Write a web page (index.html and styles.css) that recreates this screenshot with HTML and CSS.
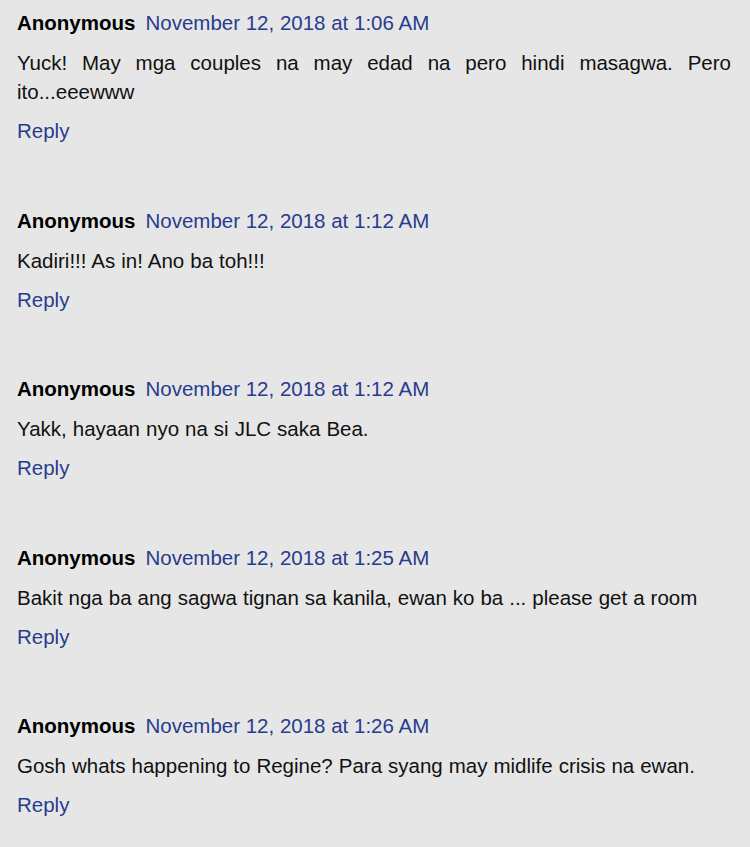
FILE: index.html
```html
<!DOCTYPE html>
<html lang="tl">
<head>
  <meta charset="UTF-8" />
  <meta name="viewport" content="width=device-width, initial-scale=1.0"/>
  <title>Comments</title>
  <link rel="stylesheet" href="styles.css">
</head>
<body>

  <div class="comments">
    <div class="comment">
      <div class="comment-header">
        <span class="user">Anonymous</span>
        <a class="date" href="#">November 12, 2018 at 1:06 AM</a>
      </div>
      <p class="comment-body">Yuck! May mga couples na may edad na pero hindi masagwa. Pero ito...eeewww</p>
      <a class="reply" href="#">Reply</a>
    </div>

    <div class="comment">
      <div class="comment-header">
        <span class="user">Anonymous</span>
        <a class="date" href="#">November 12, 2018 at 1:12 AM</a>
      </div>
      <p class="comment-body">Kadiri!!! As in! Ano ba toh!!!</p>
      <a class="reply" href="#">Reply</a>
    </div>

    <div class="comment">
      <div class="comment-header">
        <span class="user">Anonymous</span>
        <a class="date" href="#">November 12, 2018 at 1:12 AM</a>
      </div>
      <p class="comment-body">Yakk, hayaan nyo na si JLC saka Bea.</p>
      <a class="reply" href="#">Reply</a>
    </div>

    <div class="comment">
      <div class="comment-header">
        <span class="user">Anonymous</span>
        <a class="date" href="#">November 12, 2018 at 1:25 AM</a>
      </div>
      <p class="comment-body">Bakit nga ba ang sagwa tignan sa kanila, ewan ko ba ... please get a room</p>
      <a class="reply" href="#">Reply</a>
    </div>

    <div class="comment">
      <div class="comment-header">
        <span class="user">Anonymous</span>
        <a class="date" href="#">November 12, 2018 at 1:26 AM</a>
      </div>
      <p class="comment-body">Gosh whats happening to Regine? Para syang may midlife crisis na ewan.</p>
      <a class="reply" href="#">Reply</a>
    </div>
  </div>

</body>
</html>
```

FILE: styles.css
```css
/* Fondo general */
body {
  margin: 0;
  background: #e6e6e6;
  font-family: "Liberation Sans", Arial, sans-serif;
  font-size: 20.5px;
  line-height: 29px;
  color: #111;
}

/* Lista de comentarios */
.comments {
  display: flex;
  flex-direction: column;
  gap: 60.5px;
  padding: 8px 19px 0 17px;
}

.comment {
  display: flex;
  flex-direction: column;
  align-items: flex-start;
}

.comment-header {
  display: flex;
  gap: 10px;
}

.user {
  font-weight: bold;
  color: #000;
}

.date,
.reply {
  color: #283c8e;
  text-decoration: none;
}

.comment-body {
  margin: 11px 0 10px;
  text-align: justify;
  align-self: stretch;
  word-spacing: 0.3px;
}
```
